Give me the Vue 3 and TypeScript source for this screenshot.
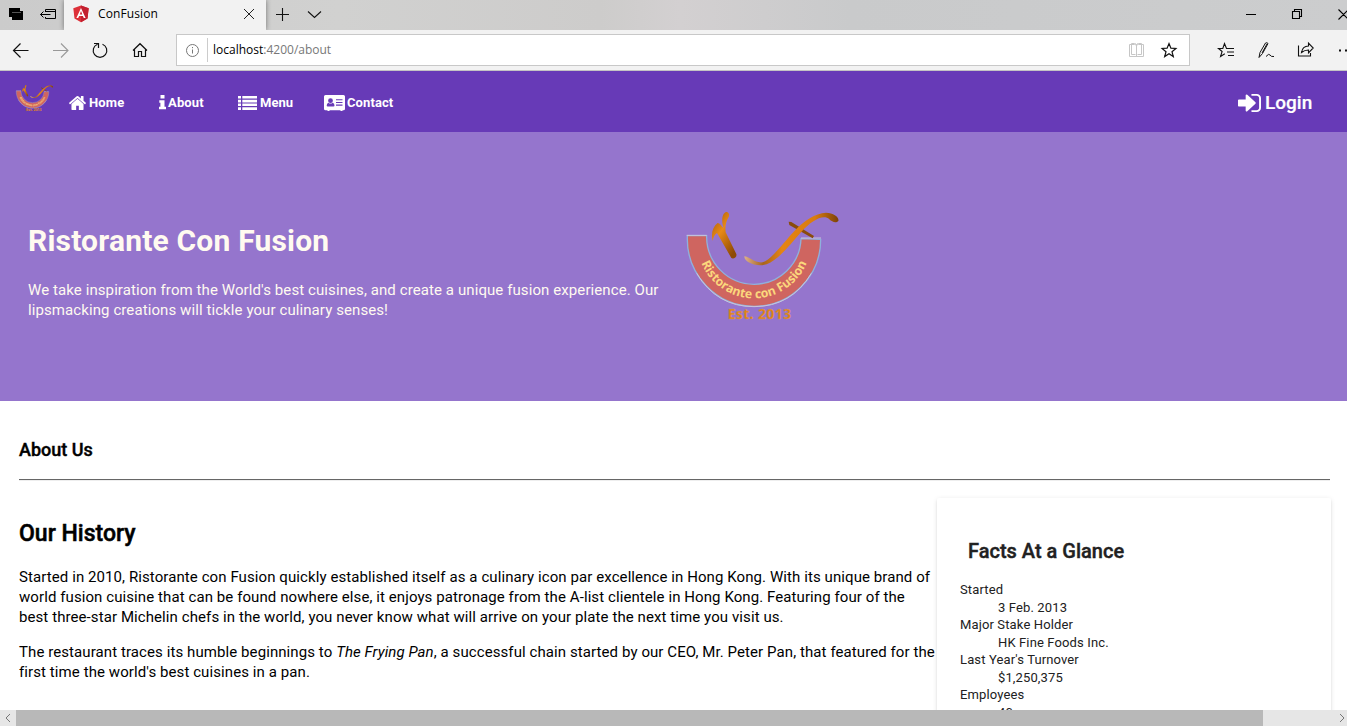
<script setup lang="ts">
interface Fact { term: string; detail: string }

const facts: Fact[] = [
  { term: 'Started', detail: '3 Feb. 2013' },
  { term: 'Major Stake Holder', detail: 'HK Fine Foods Inc.' },
  { term: "Last Year's Turnover", detail: '$1,250,375' },
  { term: 'Employees', detail: '40' },
]
</script>

<template>
  <div class="window">
    <svg class="defs" aria-hidden="true">
      <defs>
        <linearGradient id="gold" x1="0" y1="0" x2="0.7" y2="1">
          <stop offset="0" stop-color="#9a5208" />
          <stop offset="0.45" stop-color="#e88a16" />
          <stop offset="1" stop-color="#8e4a06" />
        </linearGradient>
        <linearGradient id="swoosh" x1="0" y1="0" x2="1" y2="0">
          <stop offset="0" stop-color="#dcb08a" />
          <stop offset="0.2" stop-color="#a8641c" />
          <stop offset="0.4" stop-color="#e58412" />
          <stop offset="0.75" stop-color="#d97c10" />
          <stop offset="1" stop-color="#7c4208" />
        </linearGradient>
        <path id="ribbon-curve" d="M81 124 A171 171 0 0 0 423 124" />
        <symbol id="logo" viewBox="0 0 540 390">
          <path d="M52 107 L110 107 A143 143 0 0 0 252 253 A142 142 0 0 0 393 116 L452 118 A200 200 0 0 1 252 319 A200 204 0 0 1 52 107Z" fill="#cf6560" stroke="#8fb0dc" stroke-width="4" />
          <path d="M50 106H110M393 114H453M80 220Q140 320 252 320T424 220" fill="none" stroke="#c9c4dc" stroke-width="3" />
          <path d="M128 123C122 98 129 80 143 69C149 69 154 78 161 84C154 65 155 41 168 36C178 35 180 47 174 55C167 67 165 82 167 97L199 162C202 172 190 178 184 174L141 99C134 103 130 111 128 123Z" fill="url(#gold)" />
          <path d="M356 65L364 66L432 108L428 115L358 75Z" fill="#8a4c0c" />
          <path d="M223 169C237 169 254 190 278 187C304 180 345 122 374 92C403 61 435 40 468 38C491 39 508 51 505 63C498 70 486 66 478 58C460 41 424 62 393 97C363 130 328 178 290 193C257 202 222 186 223 169Z" fill="url(#swoosh)" />
          <text class="logo-ribbon"><textPath href="#ribbon-curve" startOffset="50%" text-anchor="middle" textLength="404">Ristorante con Fusion</textPath></text>
          <text class="logo-est" x="173" y="358" textLength="190">Est. 2013</text>
        </symbol>
      </defs>
    </svg>

    <div class="titlebar">
      <svg class="tab-tools" width="64" height="30" viewBox="0 0 64 30">
        <path d="M9 8h11v3h-8v6H9z" fill="#000" />
        <path d="M12 11h11v9h-11z" fill="#000" />
        <path d="M12 12.500h9" stroke="#555" />
        <path d="M45.500 12V9.500h10v9h-10V17M45 11.500h10M40.500 14.500h10M43.500 11.500l-3 3 3 3" fill="none" stroke="#000" />
      </svg>
      <div class="tab">
        <svg class="favicon" width="16" height="18" viewBox="0 0 16 18">
          <path d="M8 .5L15.700 3.200 14.500 13.500 8 17.300 1.500 13.500.3 3.200z" fill="#dd3039" />
          <path d="M8 .5L15.700 3.200 14.500 13.500 8 17.300z" fill="#c3202f" />
          <path fill-rule="evenodd" d="M8 3L3.400 13.100h1.800l.9-2.200h3.800l.9 2.200h1.800zM8 6.100l1.300 3.300H6.700z" fill="#fff" />
        </svg>
        <span class="tab-title">ConFusion</span>
        <svg class="tab-close" width="12" height="12" viewBox="0 0 12 12"><path d="M1 1l10 10M11 1L1 11" stroke="#222" fill="none" /></svg>
      </div>
      <svg width="64" height="30" viewBox="0 0 64 30">
        <path d="M10 14.500h13M16.500 8v13M42 11.500l6.500 6 6.500-6" fill="none" stroke="#111" stroke-width="1.100" />
      </svg>
      <svg class="window-controls" width="107" height="30" viewBox="0 0 107 30">
        <path d="M6 14.500h10M52.500 11.500h7v7h-7zM54.500 11.500v-2h7v7h-2M98.500 9.500l10 10M98.500 19.500l10-10" fill="none" stroke="#000" stroke-width="1.100" />
      </svg>
    </div>

    <div class="toolbar">
      <svg class="nav-icons" width="176" height="40" viewBox="0 0 176 40">
        <path d="M13.500 20.500h15M20.500 13.500l-7 7 7 7" fill="none" stroke="#111" stroke-width="1.200" />
        <path d="M53 20.500h15M61 13.500l7 7-7 7" fill="none" stroke="#999" stroke-width="1.100" />
        <path d="M97.500 14.200a6.800 6.800 0 1 0 5 0M94 13.500h4.500v4.500" fill="none" stroke="#111" stroke-width="1.200" />
        <path d="M133 20.500l7-6.800 7 6.800M134.500 19.500v7h4v-5h3v5h4v-7" fill="none" stroke="#111" stroke-width="1.200" />
      </svg>
      <div class="address">
        <svg width="31" height="30" viewBox="0 0 31 30">
          <circle cx="15.500" cy="15.500" r="6" fill="none" stroke="#777" />
          <path d="M15.500 14.500v4M15.500 12v1.200" stroke="#777" fill="none" />
          <path d="M30.500 3v24" stroke="#ccc" fill="none" />
        </svg>
        <span class="url">localhost<span>:4200/about</span></span>
        <svg class="address-tools" width="62" height="30" viewBox="0 0 62 30">
          <path d="M2.500 9.500h5q1 0 2 1 1-1 2-1h5v12h-14zM4.500 9.500v-1h3q2 0 2 2v11M14.500 9.500v-1h-3q-2 0-2 2M4.500 9v10.500h4M14.500 9v10.500h-4" fill="none" stroke="#c6c6c6" />
          <path d="M42 8.500l1.900 4.700 5 .3-3.900 3.200 1.300 4.900-4.300-2.800-4.300 2.800 1.300-4.900-3.900-3.200 5-.3z" fill="none" stroke="#111" stroke-width="1.200" />
        </svg>
      </div>
      <svg class="right-icons" width="147" height="40" viewBox="0 0 147 40">
        <path d="M32 18.500h-5.500l-2-5-1.700 5h-4.300l3.600 3-1.500 5 4.200-2.700M27 18.500h7M27 22h7M28 25.500h6" fill="none" stroke="#111" stroke-width="1.100" />
        <path d="M59 27.500l1-5 5.500-9.500q1.500-.8 2.500.5l-5.500 10-3.500 4M62 23l5-9M66 26.500q3-3.500 4-1.500t4 1.500" fill="none" stroke="#111" stroke-width="1" />
        <path d="M98.500 15.500v10.500h12v-3M101.500 22.500q1-6.500 7-6.500v-2.800l4.700 4.800-4.700 4.800V20q-4 0-7 2.500z" fill="none" stroke="#111" stroke-width="1.100" />
        <path d="M139 19.500h2v2h-2zM145 19.500h2v2h-2z" fill="#111" />
      </svg>
    </div>

    <div class="page">
      <header class="navbar">
        <svg class="brand" width="44" height="32"><use href="#logo" /></svg>
        <a class="link home">
          <svg width="17" height="14" viewBox="20 250 1624 1286" preserveAspectRatio="none"><path d="M1408 992v480q0 26-19 45t-45 19h-384v-384h-256v384h-384q-26 0-45-19t-19-45v-480q0-1 .5-3t.5-3l575-474 575 474q1 2 1 6zm223-69l-62 74q-8 9-21 11h-3q-13 0-21-7l-692-577-692 577q-12 8-24 7-13-2-21-11l-62-74q-8-10-7-23.500t11-21.500l719-599q32-26 76-26t76 26l244 204v-195q0-14 9-23t23-9h192q14 0 23 9t9 23v408l219 182q10 8 11 21.500t-7 23.500z" /></svg>
          <span>Home</span>
        </a>
        <a class="link about">
          <svg width="7" height="15" viewBox="0 0 7 15"><path d="M1.500 0h4v3.500h-4zM.7 5.200h4.800v6.600H7v2.500H0v-2.500h1.400V7.700H.3V5.200z" /></svg>
          <span>About</span>
        </a>
        <a class="link menu">
          <svg width="19" height="14" viewBox="0 0 19 14"><path d="M0 0h3v2.600H0zM4.300 0H19v2.600H4.300zM0 3.800h3v2.600H0zM4.300 3.800H19v2.600H4.300zM0 7.500h3v2.600H0zM4.300 7.500H19v2.600H4.300zM0 11.300h3v2.600H0zM4.300 11.300H19v2.600H4.300z" /></svg>
          <span>Menu</span>
        </a>
        <a class="link contact">
          <svg width="21" height="16" viewBox="0 0 21 16"><path fill-rule="evenodd" d="M1.500 0h18Q21 0 21 1.500v12.200q0 1.500-1.500 1.500h-1V16h-2v-.8h-11V16h-2v-.8h-2Q0 15.200 0 13.700V1.500Q0 0 1.500 0zM6.500 3.300a2.300 2.300 0 1 0 0 4.800 2.300 2.300 0 1 0 0-4.800zM4.500 7.700Q2.700 8.200 2.700 10.600q0 1 1 1H9.500q1 0 1-1 0-2.400-1.800-2.900Q6.500 9.500 4.500 7.700zM12 4.200v1.100h6.500V4.200zM12 6.900V8h6.500V6.900zM12 9.600v1.100h6.500V9.600z" /></svg>
          <span>Contact</span>
        </a>
        <a class="link login">
          <svg width="23" height="18" viewBox="128 256 1536 1280" preserveAspectRatio="none"><path d="M1312 896q0 26-19 45l-544 544q-19 19-45 19t-45-19-19-45v-288h-448q-26 0-45-19t-19-45v-384q0-26 19-45t45-19h448v-288q0-26 19-45t45-19 45 19l544 544q19 19 19 45zm352-352v704q0 119-84.500 203.500t-203.500 84.500h-320q-13 0-22.500-9.500t-9.500-22.500q0-4-1-20t-.5-26.500 3-23.500 10-19.500 20.500-6.500h320q66 0 113-47t47-113v-704q0-66-47-113t-113-47h-312l-11.500-1-11.500-3-8-5.500-7-9-2-13.500q0-4-1-20t-.5-26.500 3-23.500 10-19.500 20.500-6.500h320q119 0 203.500 84.500t84.500 203.500z" /></svg>
          <span>Login</span>
        </a>
      </header>

      <section class="hero">
        <div class="hero-copy">
          <h1>Ristorante Con Fusion</h1>
          <p>We take inspiration from the World's best cuisines, and create a unique fusion experience. Our<br>lipsmacking creations will tickle your culinary senses!</p>
        </div>
        <svg class="hero-logo" width="180" height="130"><use href="#logo" /></svg>
      </section>

      <main class="content">
        <h3>About Us</h3>
        <hr>
        <div class="columns">
          <section class="history">
            <h2>Our History</h2>
            <p>Started in 2010, Ristorante con Fusion quickly established itself as a culinary icon par excellence in Hong Kong. With its unique brand of<br>world fusion cuisine that can be found nowhere else, it enjoys patronage from the A-list clientele in Hong Kong. Featuring four of the<br>best three-star Michelin chefs in the world, you never know what will arrive on your plate the next time you visit us.</p>
            <p>The restaurant traces its humble beginnings to <em>The Frying Pan</em>, a successful chain started by our CEO, Mr. Peter Pan, that featured for the<br>first time the world's best cuisines in a pan.</p>
          </section>
          <aside class="card">
            <h3>Facts At a Glance</h3>
            <dl>
              <template v-for="fact in facts" :key="fact.term">
                <dt>{{ fact.term }}</dt>
                <dd>{{ fact.detail }}</dd>
              </template>
            </dl>
          </aside>
        </div>
      </main>
    </div>

    <div class="scrollbar">
      <svg width="16" height="16" viewBox="0 0 16 16"><path d="M10 4L6 8l4 4" fill="none" stroke="#777" /></svg>
      <div class="thumb"></div>
      <svg class="arrow-right" width="16" height="16" viewBox="0 0 16 16"><path d="M9 4l4 4-4 4" fill="none" stroke="#777" /></svg>
    </div>
  </div>
</template>

<style>
body { overflow: hidden; }
</style>

<style scoped>
.window { width: 1347px; height: 726px; overflow: hidden; display: flex; flex-direction: column; background: #fff; font-family: Roboto, "Liberation Sans", sans-serif; color: #000; }
.window svg { display: block; flex: none; }
.window .defs { position: absolute; width: 0; height: 0; }
.titlebar { height: 30px; flex: none; display: flex; background: linear-gradient(90deg, #cbcbcb 0, #d1d1d0 340px, #cdcccb 600px, #d3d0d1 680px, #c9cacb 850px, #cccdce 100%); }
.tab { width: 202px; height: 30px; display: flex; align-items: center; background: #f2f2f2; box-shadow: 0 0 5px rgba(0, 0, 0, .45); clip-path: inset(0 -6px); }
.favicon { margin: -3px 0 0 9px; }
.tab-title { margin: -3px 0 0 9px; width: 145px; font: 12px/16px "Open Sans", "Noto Sans", sans-serif; letter-spacing: .1px; }
.tab-close { margin-top: -2px; }
.window-controls { margin-left: auto; }
.toolbar { height: 40px; flex: none; display: flex; background: #f2f2f2; border-bottom: 1px solid #c4c4c4; }
.address { box-sizing: border-box; width: 1014px; height: 32px; margin-top: 4px; border: 1px solid #c8c8c8; background: #fff; display: flex; }
.url { margin-left: 5px; font: 12px/29px "Open Sans", "Noto Sans", sans-serif; }
.url span { color: #777; }
.address-tools { margin-left: auto; }
.right-icons { margin-left: auto; }
.page { height: 639px; flex: none; overflow: hidden; }
.navbar { height: 61px; display: flex; background: #673ab7; color: #fff; }
.navbar svg { fill: #fff; }
.navbar .brand { margin: 11px 0 0 12px; }
.link { display: flex; align-items: center; height: 63px; gap: 3px; font-size: 13px; font-weight: 700; white-space: nowrap; }
.home { margin-left: 13px; width: 90px; letter-spacing: .15px; }
.about { width: 79px; gap: 2px; letter-spacing: .15px; }
.menu { width: 86px; }
.contact { width: 100px; gap: 2px; letter-spacing: .1px; }
.login { margin-left: auto; width: 109px; gap: 4px; font-size: 19px; font-weight: 500; -webkit-text-stroke: .2px; }
.hero { height: 269px; background: #9575cd; display: flex; color: floralwhite; }
.hero-copy { width: 642px; padding: 90px 0 0 28px; white-space: nowrap; }
.hero h1 { margin: 0; font-size: 30px; line-height: 38px; font-weight: 700; letter-spacing: .19px; }
.hero p { margin: 20px 0 0; font-size: 15px; line-height: 20px; letter-spacing: .09px; }
.hero-logo { margin-top: 68px; }
.logo-ribbon { font: 700 37px "Open Sans", sans-serif; fill: #fbd77c; }
.logo-est { font: 700 42px "Open Sans", sans-serif; fill: #e28112; stroke: #c99a78; stroke-width: 1px; }
.content { padding: 38px 16px 0 19px; }
.content h3 { margin: 0; font-size: 18px; line-height: 22px; font-weight: 500; -webkit-text-stroke: .4px; }
hr { margin: 18px 1px 0 0; height: 1px; border: 0; background: #666; box-shadow: 0 1px 0 #eee; }
.columns { display: flex; margin-top: 18px; }
.history { width: 918px; white-space: nowrap; }
.history h2 { margin: 22px 0 19px; font-size: 23px; line-height: 28px; font-weight: 500; -webkit-text-stroke: .5px; }
.history p { margin: 0 0 15px; font-size: 15px; line-height: 20px; letter-spacing: .085px; }
.card { flex: 1; height: 300px; box-sizing: border-box; padding: 40px 23px 0; border-radius: 2px; background: #fff; color: #212121; box-shadow: 0 3px 1px -2px rgba(0,0,0,.12), 0 2px 2px rgba(0,0,0,.1), 0 1px 5px rgba(0,0,0,.1); }
.card h3 { margin: 0 0 0 8px; font-size: 20px; line-height: 26px; color: #212121; }
dl { margin: 17px 0 0; font-size: 13px; line-height: 17.500px; letter-spacing: .13px; }
dd { margin-left: 38px; }
.scrollbar { height: 16px; flex: none; display: flex; background: #e6e6e6; }
.thumb { width: 1247px; background: #b8b8b8; }
.arrow-right { margin-left: auto; }
</style>
